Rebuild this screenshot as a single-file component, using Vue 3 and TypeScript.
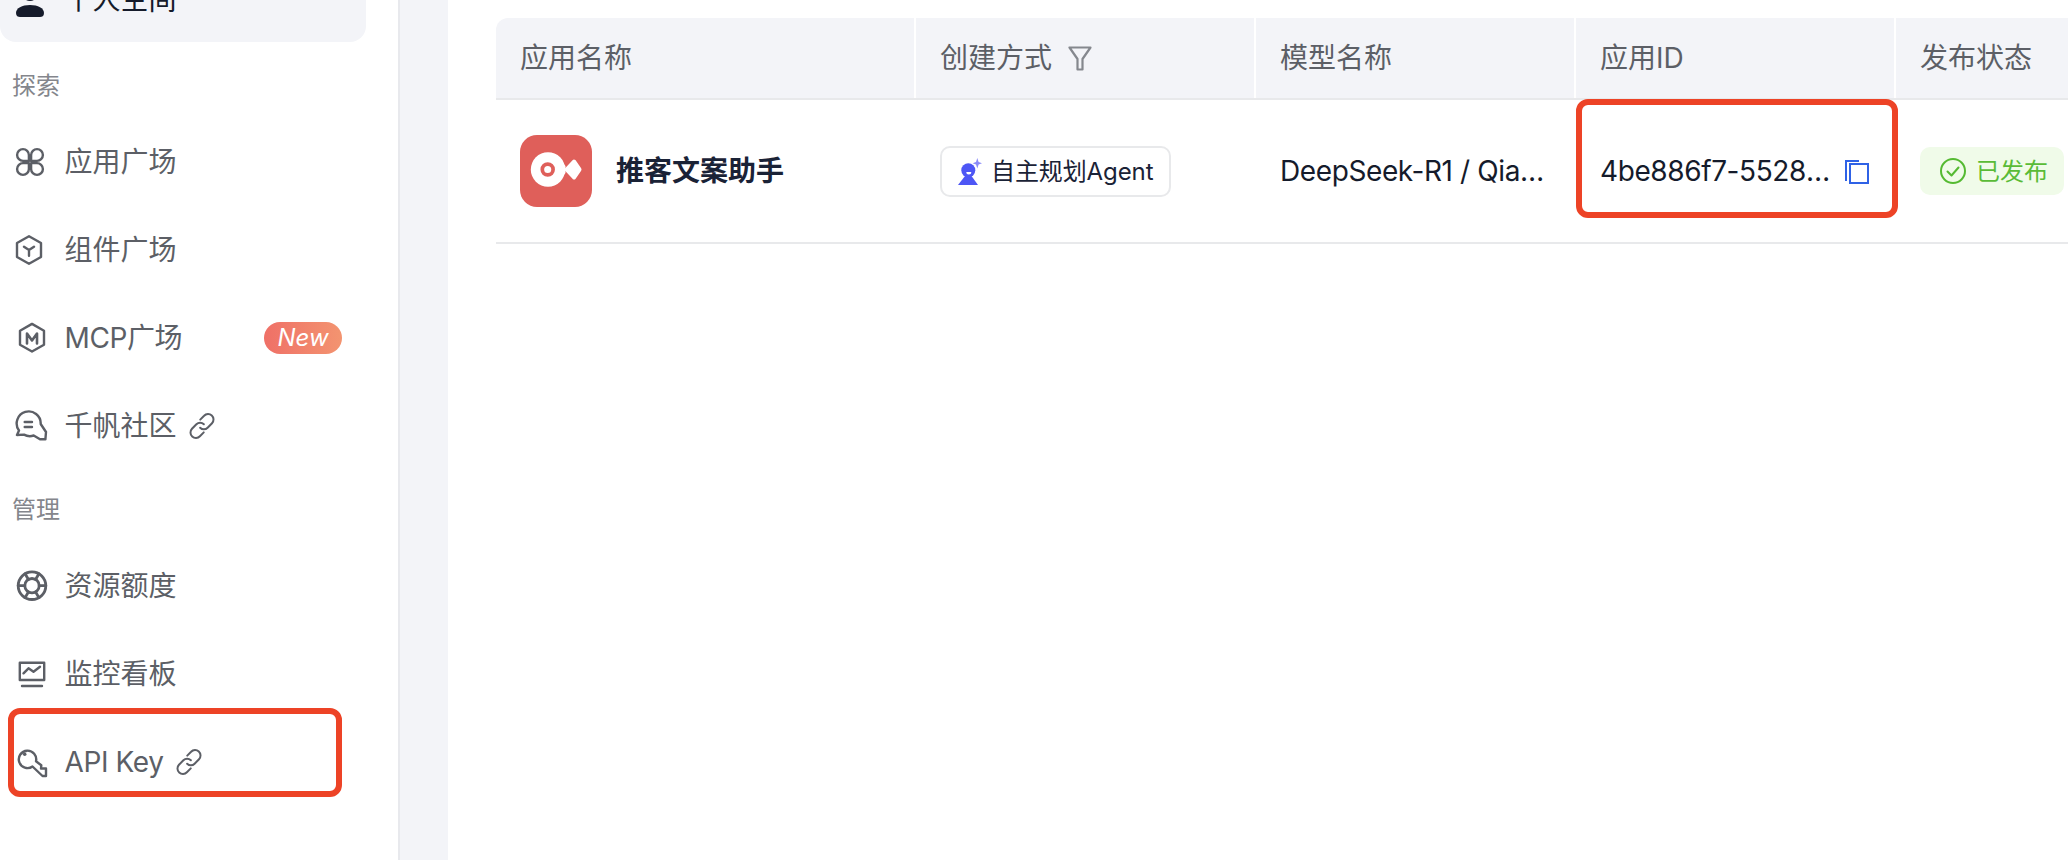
<script setup lang="ts">
interface NavItem { label: string; icon: string; link?: boolean; badge?: string; active?: boolean; latin?: boolean }
interface NavGroup { title?: string; items: NavItem[] }

const groups: NavGroup[] = [
  { items: [{ label: '个人空间', icon: 'user', active: true }] },
  {
    title: '探索',
    items: [
      { label: '应用广场', icon: 'apps' },
      { label: '组件广场', icon: 'comp' },
      { label: 'MCP广场', icon: 'mcp', badge: 'New', latin: true },
      { label: '千帆社区', icon: 'chat', link: true },
    ],
  },
  {
    title: '管理',
    items: [
      { label: '资源额度', icon: 'quota' },
      { label: '监控看板', icon: 'monitor' },
      { label: 'API Key', icon: 'key', link: true, latin: true },
    ],
  },
]
const columns = ['应用名称', '创建方式', '模型名称', '应用ID', '发布状态']
const spokes = [0, 60, 120, 180, 240, 300]
</script>

<template>
  <div class="page">
    <aside class="sidebar">
      <section v-for="(group, gi) in groups" :key="gi" class="group">
        <div v-if="group.title" class="group-title">{{ group.title }}</div>
        <a v-for="item in group.items" :key="item.label" class="nav-item" :class="{ active: item.active }">
          <svg class="nav-icon" viewBox="0 0 34 34" fill="none" stroke="currentColor" stroke-width="2.4" stroke-linejoin="round" stroke-linecap="round">
            <template v-if="item.icon === 'user'">
              <circle cx="16" cy="10" r="8" fill="currentColor" stroke="none" />
              <path d="M2 30c0-5 6-8 14-8s14 3 14 8c0 3-2 4-4 4H6c-2 0-4-1-4-4z" fill="currentColor" stroke="none" />
            </template>
            <template v-else-if="item.icon === 'apps'">
              <path d="M14.900 15.900H9.100a5.900 5.900 0 1 1 5.800-5.900zM17.100 15.900V10a5.900 5.900 0 1 1 5.800 5.900zM14.900 18.100V24a5.900 5.900 0 1 1-5.800-5.900zM17.100 18.100h5.800a5.900 5.900 0 1 1-5.800 5.900z" />
            </template>
            <template v-else-if="item.icon === 'comp'">
              <path d="M15 3.200l12 6.800v14l-12 6.800-12-6.800V10z" />
              <path d="M10 13.700l5 3.300 5-3.300M15 17v5.700" />
            </template>
            <template v-else-if="item.icon === 'mcp'">
              <path d="M18 2.900l12 6.800v14l-12 6.800-12-6.800V9.700z" />
              <path d="M13 22.500V12.500l5 7 5-7v10" stroke-width="2.600" />
            </template>
            <template v-else-if="item.icon === 'chat'">
              <path d="M26.700 15A12 12 0 1 0 5 21.500L3 26l7-.4a12 12 0 0 0 9.700.9l6.300 3.800h5.400L32 23z" />
              <path d="M10.700 13H18M10.700 18H18" />
            </template>
            <template v-else-if="item.icon === 'quota'">
              <circle cx="18" cy="16.700" r="13.800" stroke-width="2.800" />
              <circle cx="18" cy="16.700" r="7.200" stroke-width="2.800" />
              <path v-for="deg in spokes" :key="deg" d="M18 9.500V2.900" stroke-width="2.800" :transform="`rotate(${deg + 30} 18 16.700)`" />
            </template>
            <template v-else-if="item.icon === 'monitor'">
              <path d="M5.800 5.700h24.400V23H5.800z" />
              <path d="M9.500 16.300l5-5 5 3.400 6.500-5M8 29h20" />
            </template>
            <template v-else-if="item.icon === 'key'">
              <path d="M22 16.300a8.700 8.700 0 1 0-3.500 5.200L28.500 31H32v-7.500h-5l.3-3.200z" />
              <circle cx="10.700" cy="9.300" r="1.800" fill="currentColor" stroke="none" />
            </template>
          </svg>
          <span class="nav-label" :class="{ latin: item.latin }">{{ item.label }}</span>
          <svg v-if="item.link" class="link-icon" viewBox="0 0 24 24" fill="none" stroke="currentColor" stroke-width="1.700" stroke-linecap="round">
            <path d="M10.500 6.500l3.300-3.300a4.500 4.500 0 0 1 6.800 6.400l-3.800 3.900a4.500 4.500 0 0 1-6.400 0" />
            <path d="M13.500 17.500l-3.300 3.300a4.500 4.500 0 0 1-6.800-6.400l3.800-3.900a4.500 4.500 0 0 1 6.400 0" />
          </svg>
          <span v-if="item.badge" class="badge">{{ item.badge }}</span>
        </a>
      </section>
    </aside>

    <div class="gutter"></div>

    <main class="main">
      <div class="table">
        <div class="thead">
          <div v-for="col in columns" :key="col" class="th">
            <span>{{ col }}</span>
            <svg v-if="col === '创建方式'" class="filter" viewBox="0 0 24 25" fill="none" stroke="#85888e" stroke-width="2.200" stroke-linejoin="round">
              <path d="M1.500 1.500h21l-8 11.500v10.500h-5V13z" />
            </svg>
          </div>
        </div>
        <div class="tr">
          <div class="td app">
            <svg class="logo" viewBox="0 0 72 72">
              <rect width="72" height="72" rx="17" fill="#df5f5a" />
              <circle cx="28" cy="34.500" r="17.200" fill="#fff" />
              <path d="M35 19l10.500 12v7L35 50z" fill="#fff" />
              <circle cx="27.700" cy="34.500" r="5.400" fill="#fff" stroke="#df5f5a" stroke-width="3.700" />
              <path d="M46.500 34.500l7.500-8 5.500 8-5.500 8z" fill="#fff" stroke="#fff" stroke-width="4" stroke-linejoin="round" />
            </svg>
            <span class="app-name">推客文案助手</span>
          </div>
          <div class="td">
            <span class="mode-tag">
              <svg class="mode-icon" viewBox="0 0 24 27">
                <path d="M19.300 0l1.300 4 3.400 1.300-3.400 1.300-1.300 4-1.300-4-3.400-1.300L18 4z" fill="#8b8bf8" />
                <circle cx="10.300" cy="12.300" r="7" fill="#4d56f5" />
                <path d="M8.300 14a2.500 2.500 0 0 0 5 0z" fill="#fff" />
                <path d="M7 18h6.500L20 27H0z" fill="#4d56f5" />
              </svg>
              <span class="tag-text mode-text">自主规划Agent</span>
            </span>
          </div>
          <div class="td"><span class="ellipsis">DeepSeek-R1 / Qianfan-Agent</span></div>
          <div class="td id-cell">
            <span class="ellipsis">4be886f7-5528-4a1c-9d27-61fa07c3e2b4</span>
            <svg class="copy" viewBox="0 0 27 25" fill="none" stroke="#2f62e6" stroke-width="2">
              <path d="M7 5h18v19H7z" />
              <path d="M3 22V2h13" />
            </svg>
          </div>
          <div class="td">
            <span class="status-tag">
              <svg class="status-icon" viewBox="0 0 26 26" fill="none" stroke="#55ba32" stroke-width="2" stroke-linecap="round" stroke-linejoin="round">
                <circle cx="13" cy="13" r="12" />
                <path d="M7.500 13.500l4 4 7-8" />
              </svg>
              <span class="tag-text">已发布</span>
            </span>
          </div>
        </div>
      </div>
    </main>

    <div class="mark mark-key"></div>
    <div class="mark mark-id"></div>
  </div>
</template>

<style>
html, body { margin: 0; background: #fff; overflow: hidden; }
</style>

<style scoped>
.page {
  position: relative;
  display: flex;
  width: 2068px;
  height: 860px;
  overflow: hidden;
  background: #fff;
  font-family: Inter, "Noto Sans CJK SC", sans-serif;
  color: #151b2b;
}
.sidebar {
  box-sizing: border-box;
  width: 400px;
  flex: none;
  padding-right: 32px;
  margin-top: -42px;
  border-right: 2px solid #e8e9ed;
  height: 902px;
}
.group {
  display: flex;
  flex-direction: column;
}
.group-title {
  height: 72px;
  box-sizing: border-box;
  padding: 23px 0 0 12px;
  font-size: 24px;
  line-height: 30px;
  color: #84868c;
}
.group:nth-child(2) .group-title { margin-top: 2px; }
.nav-item {
  display: flex;
  align-items: center;
  height: 84px;
  margin-bottom: 4px;
  border-radius: 16px;
  color: #5c5f66;
  font-size: 28px;
}
.nav-item.active {
  background: #f3f4f8;
  color: #151b2b;
}
.nav-icon {
  width: 34px;
  height: 34px;
  margin-left: 14px;
  margin-right: 16.500px;
  flex: none;
}
.nav-label { line-height: 40px; white-space: nowrap; }
.nav-label.latin { letter-spacing: -0.4px; }
.link-icon {
  width: 28px;
  height: 28px;
  margin-left: 11px;
}
.badge {
  margin-left: auto;
  margin-right: 24px;
  width: 78px;
  height: 32px;
  border-radius: 16px;
  background: linear-gradient(90deg, #ef7067, #f39470);
  color: #fff;
  font-size: 24px;
  font-style: italic;
  line-height: 32px;
  text-align: center;
}
.gutter {
  width: 48px;
  flex: none;
  background: #f3f4f8;
}
.main {
  flex: 1;
  min-width: 0;
  padding: 18px 0 0 48px;
}
.table { width: 1572px; }
.thead, .tr {
  display: grid;
  grid-template-columns: 420px 340px 320px 320px 172px;
}
.thead {
  height: 80px;
  background: #f3f4f8;
  border-bottom: 2px solid #e8e9eb;
  border-radius: 12px 0 0 0;
}
.th {
  display: flex;
  align-items: center;
  padding-left: 24px;
  font-size: 28px;
  line-height: 40px;
  color: #5c5f66;
  border-right: 2px solid #fff;
  box-sizing: border-box;
  white-space: nowrap;
}
.th:last-child { border-right: 0; }
.filter {
  width: 24px;
  height: 25px;
  margin-left: 16px;
}
.tr {
  height: 142px;
  border-bottom: 2px solid #e8e9eb;
}
.td {
  display: flex;
  align-items: center;
  min-width: 0;
  padding: 0 24px;
  font-size: 28px;
  line-height: 40px;
  white-space: nowrap;
}
.app { gap: 24px; }
.logo { width: 72px; height: 72px; flex: none; }
.app-name { font-weight: 600; color: #1a2236; }
.mode-tag {
  display: inline-flex;
  align-items: center;
  box-sizing: border-box;
  width: 231px;
  height: 51px;
  padding-left: 16px;
  border: 2px solid #e8e9eb;
  border-radius: 10px;
  font-size: 24px;
  line-height: 34px;
  color: #1a2236;
}
.mode-icon { width: 24px; height: 27px; margin-right: 9px; flex: none; }
.tag-text { padding-top: 2px; }
.mode-text { letter-spacing: -0.1px; }
.ellipsis {
  flex: 1;
  min-width: 0;
  overflow: hidden;
  text-overflow: ellipsis;
  letter-spacing: -0.4px;
}
.id-cell { padding-right: 26px; gap: 10px; }
.copy { width: 27px; height: 25px; flex: none; }
.status-tag {
  display: inline-flex;
  align-items: center;
  box-sizing: border-box;
  width: 144px;
  height: 48px;
  flex: none;
  padding-left: 20px;
  gap: 10px;
  background: #f0fbe9;
  border-radius: 10px;
  font-size: 24px;
  line-height: 34px;
  color: #5abb37;
}
.status-icon { width: 26px; height: 26px; flex: none; }
.mark {
  position: absolute;
  box-sizing: border-box;
  border: 6px solid #ed4326;
  border-radius: 12px;
}
.mark-key { left: 8px; top: 708px; width: 334px; height: 89px; }
.mark-id { left: 1576px; top: 99px; width: 322px; height: 119px; }
</style>
